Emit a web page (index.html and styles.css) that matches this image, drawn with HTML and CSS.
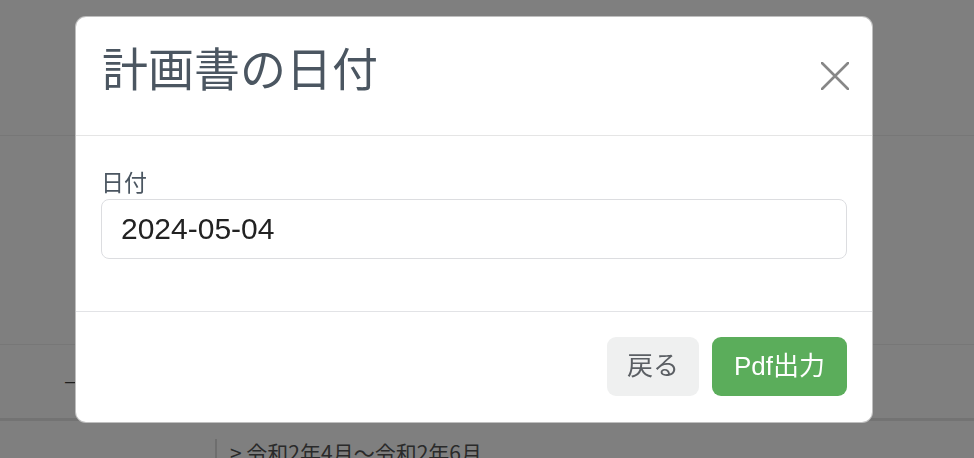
FILE: index.html
```html
<!DOCTYPE html>
<html lang="ja">
<head>
<meta charset="utf-8">
<title>計画書の日付</title>
<link rel="stylesheet" href="styles.css">
</head>
<body>
<div class="page">
  <div class="page-header"></div>
  <div class="page-section"></div>
  <div class="page-row"><span class="dash">—</span></div>
  <div class="page-list"><span class="period">&gt; 令和2年4月〜令和2年6月</span></div>
</div>

<div class="overlay">
  <div class="modal">
    <div class="modal-header">
      <h1 class="modal-title">計画書の日付</h1>
      <button class="close" type="button" aria-label="閉じる">
        <svg width="28" height="28" viewBox="0 0 28 28"><path d="M1 1 L27 27 M27 1 L1 27" stroke="#878787" stroke-width="2.6" stroke-linecap="round" fill="none"/></svg>
      </button>
    </div>
    <div class="modal-body">
      <label class="field-label">日付</label>
      <div class="date-input">2024-05-04</div>
    </div>
    <div class="modal-footer">
      <button class="btn btn-back" type="button">戻る</button>
      <button class="btn btn-pdf" type="button">Pdf出力</button>
    </div>
  </div>
</div>
</body>
</html>
```
FILE: styles.css
```css
* { box-sizing: border-box; }
html, body { margin: 0; padding: 0; }
body {
  width: 974px;
  height: 458px;
  overflow: hidden;
  background: #ffffff;
  font-family: "Liberation Sans", "Noto Sans CJK JP", sans-serif;
}

/* background page */
.page { width: 974px; }
.page-header { height: 136px; border-bottom: 1px solid #eeeeee; }
.page-section { height: 209px; border-bottom: 1px solid #eeeeee; }
.page-row {
  height: 76px;
  border-bottom: 3px solid #e6e6e6;
  display: flex;
  align-items: center;
  padding-left: 65px;
}
.dash { font-size: 16px; color: #3c3c3c; line-height: 1; }
.page-list {
  margin-top: 18px;
  margin-left: 215px;
  border-left: 2px solid #dcdcdc;
  padding-left: 13px;
  height: 40px;
  padding-top: 1px;
}
.period { font-size: 21px; color: #555555; line-height: 24px; font-family: "Noto Sans CJK JP", sans-serif; }

/* overlay + modal */
.overlay {
  position: fixed;
  inset: 0;
  background: rgba(0, 0, 0, 0.5);
}
.modal {
  margin: 16px 0 0 75px;
  width: 798px;
  height: 407px;
  background: #ffffff;
  border: 1px solid rgba(0, 0, 0, 0.25);
  border-radius: 11px;
  display: flex;
  flex-direction: column;
  overflow: hidden;
}
.modal-header {
  height: 119px;
  flex: none;
  border-bottom: 1px solid #e5e5e5;
  display: flex;
  justify-content: space-between;
  align-items: flex-start;
  padding: 0 23px 0 26px;
}
.modal-title {
  margin: 21px 0 0 0;
  font-family: "Noto Sans CJK JP", sans-serif;
  font-weight: 400;
  font-size: 46px;
  line-height: 56px;
  color: #4b5661;
}
.close {
  margin-top: 45px;
  padding: 0;
  border: 0;
  background: transparent;
  width: 28px;
  height: 28px;
  display: flex;
}
.modal-body {
  height: 175px;
  flex: none;
  padding: 30px 25px 0 25px;
  display: flex;
  flex-direction: column;
}
.field-label {
  font-family: "Noto Sans CJK JP", sans-serif;
  font-size: 23px;
  line-height: 30px;
  color: #4b5661;
}
.date-input {
  margin-top: 3px;
  height: 60px;
  border: 1px solid #dcdde0;
  border-radius: 8px;
  padding-left: 19px;
  display: flex;
  align-items: center;
  font-size: 30px;
  color: #222222;
}
.modal-footer {
  flex: 1;
  border-top: 1px solid #e2e3e6;
  display: flex;
  justify-content: flex-end;
  align-items: flex-start;
  gap: 13px;
  padding: 25px 25px 0 0;
}
.btn {
  height: 59px;
  border: 0;
  border-radius: 9px;
  padding: 0;
  font-family: "Liberation Sans", "Noto Sans CJK JP", sans-serif;
  font-size: 26px;
  line-height: 59px;
}
.btn-back { width: 92px; background: #eff0f0; color: #5b5f64; }
.btn-pdf { width: 135px; background: #5bad5b; color: #ffffff; }
```
